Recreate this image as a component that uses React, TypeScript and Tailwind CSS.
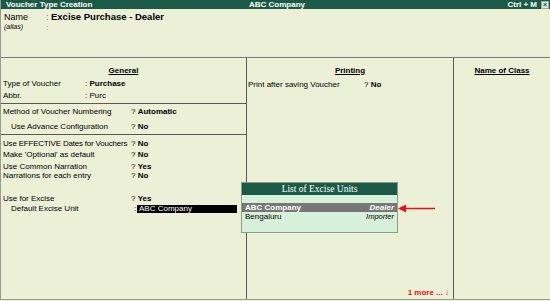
export default function App() {
  return (
    <div className="relative w-[550px] h-[301px] overflow-hidden bg-[#ecf0d6] text-black font-['Liberation_Sans',Arial,sans-serif]">
      <div className="flex flex-col w-[550px] h-[300px] border-l border-b border-[#9a9a94]">
        {/* title bar */}
        <div className="flex items-center h-[9px] bg-[#1c5a48] text-white text-[8px] font-bold leading-[9px]">
          <span className="pl-[5px] w-[246px]">Voucher Type Creation</span>
          <span className="flex-1 pl-[2px]">ABC Company</span>
          <span className="pr-[4px]">Ctrl + M</span>
          <span className="flex items-center justify-center w-[8px] h-[8px] mr-[1px] bg-[#dfe3d8] text-[#1c5a48] text-[7px] leading-none border border-[#9aa]">×</span>
        </div>

        {/* name area */}
        <div className="h-[49px] border-b border-[#7a7a74] pt-[3px] pl-[3px]">
          <div className="flex items-center h-[11px]">
            <span className="w-[42px] text-[9px]">Name</span>
            <span className="w-[5px] text-[9px] text-[#777]">:</span>
            <span className="text-[9.5px] font-bold">Excise Purchase - Dealer</span>
          </div>
          <div className="flex items-center h-[9px]">
            <span className="w-[42px] text-[7px] italic">(alias)</span>
            <span className="text-[8px] text-[#777]">:</span>
          </div>
        </div>

        {/* columns */}
        <div className="flex flex-1 text-[8px] whitespace-nowrap">
          <div className="w-[246px] border-r border-[#5a5a55] pt-[8px]">
            <div className="h-[10px] leading-[10px] text-center font-bold underline">General</div>
            <div className="flex h-[12px] leading-[12px] mt-[2px] pl-[2px]">
              <span className="w-[82px]">Type of Voucher</span>
              <span>: <b>Purchase</b></span>
            </div>
            <div className="flex h-[12px] leading-[12px] pl-[2px]">
              <span className="w-[82px]">Abbr.</span>
              <span>: Purc</span>
            </div>
            <div className="mt-[1px] border-t border-[#5a5a55]" />
            <div className="flex h-[12px] leading-[12px] mt-[2px] pl-[2px]">
              <span className="w-[128px]">Method of Voucher Numbering</span>
              <span>? <b>Automatic</b></span>
            </div>
            <div className="flex h-[12px] leading-[12px] mt-[3px] pl-[10px]">
              <span className="w-[120px]">Use Advance Configuration</span>
              <span>? <b>No</b></span>
            </div>
            <div className="mt-[1px] border-t border-[#5a5a55]" />
            <div className="flex h-[11px] leading-[11px] mt-[3px] pl-[2px]">
              <span className="w-[128px] overflow-hidden tracking-[-0.2px]">Use EFFECTIVE Dates for Vouchers</span>
              <span>? <b>No</b></span>
            </div>
            <div className="flex h-[11px] leading-[11px] pl-[2px]">
              <span className="w-[128px]">Make 'Optional' as default</span>
              <span>? <b>No</b></span>
            </div>
            <div className="flex h-[11px] leading-[11px] mt-[1px] pl-[2px]">
              <span className="w-[128px]">Use Common Narration</span>
              <span>? <b>Yes</b></span>
            </div>
            <div className="flex h-[8px] leading-[8px] pl-[2px]">
              <span className="w-[128px]">Narrations for each entry</span>
              <span>? <b>No</b></span>
            </div>
            <div className="flex h-[10px] leading-[10px] mt-[14px] pl-[2px]">
              <span className="w-[128px]">Use for Excise</span>
              <span>? <b>Yes</b></span>
            </div>
            <div className="flex items-center h-[9px] leading-[9px] pl-[10px]">
              <span className="w-[123px]">Default Excise Unit</span>
              <span className="w-[3px]">:</span>
              <span className="w-[100px] h-[8px] leading-[8px] bg-black text-white pl-[2px]">ABC Company</span>
            </div>
          </div>

          <div className="flex flex-col w-[207px] border-r border-[#5a5a55] pt-[8px]">
            <div className="h-[10px] leading-[10px] text-center font-bold underline">Printing</div>
            <div className="flex h-[12px] leading-[12px] mt-[3px] pl-[1px]">
              <span className="w-[116px]">Print after saving Voucher</span>
              <span>? <b>No</b></span>
            </div>
            <div className="flex-1" />
            <div className="text-right pr-[4px] pb-[1px] text-[#e8101a] font-bold leading-[10px]">1 more ... ↓</div>
          </div>

          <div className="flex-1 pt-[8px]">
            <div className="h-[10px] leading-[10px] text-center font-bold underline">Name of Class</div>
          </div>
        </div>
      </div>

      {/* popup list */}
      <div className="absolute left-[241px] top-[182px] w-[157px] h-[51px] border border-[#8c9c8c] bg-[#d6f0da] text-[8px]">
        <div className="h-[12px] bg-[#1c5a48] text-white text-center text-[9.5px] leading-[12px] font-['Liberation_Serif',serif]">List of Excise Units</div>
        <div className="flex justify-between h-[9px] leading-[9px] mt-[8px] px-[3px] bg-[#777775] text-white font-bold">
          <span>ABC Company</span>
          <span className="italic">Dealer</span>
        </div>
        <div className="flex justify-between h-[10px] leading-[10px] px-[3px]">
          <span>Bengaluru</span>
          <span className="italic text-[7.5px]">Importer</span>
        </div>
      </div>

      {/* pointer arrow */}
      <svg className="absolute left-[398px] top-[204px]" width="40" height="9" viewBox="0 0 40 9">
        <path d="M0 4.5 L8 0.5 L8 8.5 Z" fill="#e8101a" />
        <line x1="7" y1="4.5" x2="37" y2="4.5" stroke="#e8101a" strokeWidth="1.5" />
      </svg>
    </div>
  );
}
